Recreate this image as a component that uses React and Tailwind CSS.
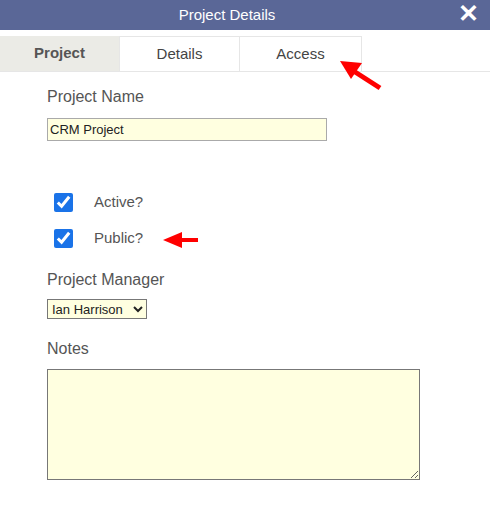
import React from 'react';

const font = { fontFamily: '"Liberation Sans", Arial, sans-serif' };

export default function App() {
  return (
    <div className="relative w-[490px] h-[517px] bg-white overflow-hidden" style={font}>
      {/* Title bar */}
      <div className="relative h-[30px] bg-[#5a6797] flex items-center justify-center pr-[36px]">
        <span className="text-white text-[15px]">Project Details</span>
        <span className="absolute right-[11px] top-[1px] text-white text-[25px] leading-[25px] font-bold">✕</span>
      </div>

      {/* Tabs */}
      <div className="mt-[5px] flex border-b border-[#e6e6e6] h-[37px] pt-[1px]">
        <div className="w-[119px] bg-[#ebebe6] flex items-center justify-center text-[15px] font-bold text-[#555]">Project</div>
        <div className="w-[121px] border-t border-l border-r border-[#e6e6e6] flex items-center justify-center text-[15px] text-[#444]">Details</div>
        <div className="w-[122px] border-t border-r border-[#e6e6e6] flex items-center justify-center text-[15px] text-[#444]">Access</div>
      </div>

      {/* Form */}
      <div className="pl-[47px] text-[#555]">
        <div className="mt-[16px] text-[16px] leading-[18px]">Project Name</div>
        <div className="mt-[12px] w-[280px] h-[23px] bg-[#ffffe0] border border-[#aaa] flex items-center px-[2px] text-[13px] text-[#222]">
          CRM Project
        </div>

        <div className="mt-[52px] flex items-center h-[19px]">
          <input type="checkbox" defaultChecked className="ml-[7px] w-[19px] h-[19px] m-0 accent-[#1a73e8]" />
          <span className="ml-[21px] text-[15px] text-[#555]">Active?</span>
        </div>
        <div className="mt-[17px] flex items-center h-[19px]">
          <input type="checkbox" defaultChecked className="ml-[7px] w-[19px] h-[19px] m-0 accent-[#1a73e8]" />
          <span className="ml-[21px] text-[15px] text-[#555]">Public?</span>
        </div>

        <div className="mt-[23px] text-[16px] leading-[18px]">Project Manager</div>
        <select className="mt-[10px] block w-[100px] h-[20px] bg-[#ffffe0] border border-[#777] text-[13px] text-[#222]">
          <option>Ian Harrison</option>
        </select>

        <div className="mt-[21px] text-[16px] leading-[18px]">Notes</div>
        <textarea className="mt-[11px] block w-[373px] h-[111px] bg-[#ffffe0] border border-[#777]" />
      </div>

      {/* Annotation arrows */}
      <svg className="absolute left-0 top-0" width="490" height="517" viewBox="0 0 490 517">
        <line x1="380" y1="88" x2="352" y2="70" stroke="#ff0000" strokeWidth="5" />
        <polygon points="340,61 362,63 351,79" fill="#ff0000" />
        <line x1="198" y1="240" x2="178" y2="240" stroke="#ff0000" strokeWidth="4" />
        <polygon points="163,240 182,232 182,248" fill="#ff0000" />
      </svg>
    </div>
  );
}
